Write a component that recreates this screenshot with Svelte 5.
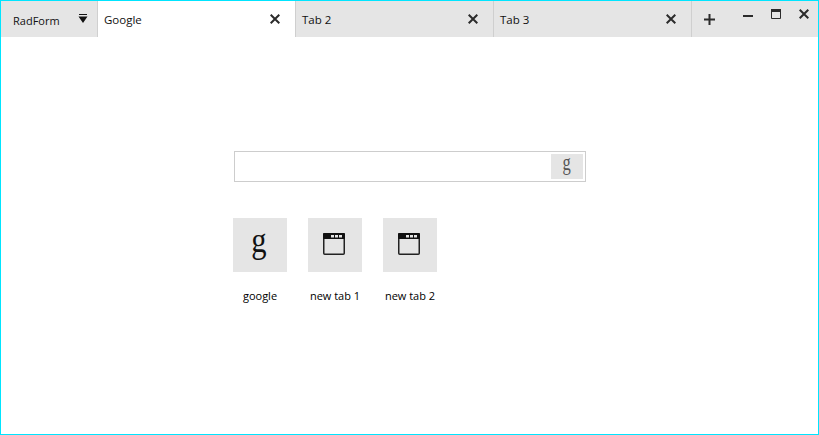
<script>
  const tabs = [
    { title: "Google", active: true },
    { title: "Tab 2" },
    { title: "Tab 3" }
  ]

  const shortcuts = [
    { label: "google", icon: "g" },
    { label: "new tab 1", icon: "window" },
    { label: "new tab 2", icon: "window" }
  ]
</script>

<div class="form">
  <header class="titlebar">
    <div class="brand">
      <span class="brand-name">RadForm</span>
      <svg class="menu-arrow" width="10" height="9" viewBox="0 0 10 9">
        <path d="M1 0h8v1H1z M0.5 2.5h9L5 9z" fill="#111" />
      </svg>
    </div>

    {#each tabs as tab}
      <div class="tab" class:active={tab.active}>
        <span class="tab-title">{tab.title}</span>
        <svg class="x" width="10" height="10" viewBox="0 0 10 10">
          <path d="M0.7 0.7l8.6 8.6M9.3 0.7L0.7 9.3" stroke="#2b2b2b" stroke-width="2" fill="none" />
        </svg>
      </div>
    {/each}

    <button class="add" aria-label="new tab">
      <svg width="11" height="11" viewBox="0 0 11 11">
        <path d="M0 5.5h11M5.5 0v11" stroke="#2b2b2b" stroke-width="2" fill="none" />
      </svg>
    </button>

    <div class="window-buttons">
      <svg width="10" height="10" viewBox="0 0 10 10">
        <path d="M0 7h10" stroke="#2b2b2b" stroke-width="2" fill="none" />
      </svg>
      <svg width="10" height="10" viewBox="0 0 10 10">
        <path d="M0.5 0.5h9v9h-9z" stroke="#2b2b2b" fill="none" />
        <path d="M0 1.5h10" stroke="#2b2b2b" stroke-width="3" fill="none" />
      </svg>
      <svg width="10" height="10" viewBox="0 0 10 10">
        <path d="M0.7 0.7l8.6 8.6M9.3 0.7L0.7 9.3" stroke="#2b2b2b" stroke-width="2" fill="none" />
      </svg>
    </div>
  </header>

  <main class="content">
    <div class="search">
      <span class="search-btn"><span class="search-g">g</span></span>
    </div>

    <div class="shortcuts">
      {#each shortcuts as item}
        <div class="shortcut">
          <div class="tile">
            {#if item.icon == "g"}
              <span class="big-g">g</span>
            {:else}
              <svg class="window-icon" width="22" height="22" viewBox="0 0 22 22">
                <rect x="0.75" y="0.75" width="20.5" height="20.5" rx="1" fill="none" stroke="#222" stroke-width="1.5" />
                <rect x="0" y="0" width="22" height="6" rx="1" fill="#111" />
                <path d="M8 2h3v2.5H8z M12 2h3v2.5h-3z M16 2h3v2.5h-3z" fill="#e5e5e5" />
              </svg>
            {/if}
          </div>
          <span class="label">{item.label}</span>
        </div>
      {/each}
    </div>
  </main>
</div>

<style>
  :global(body) {
    margin: 0;
    background: #fff;
  }

  .form {
    width: 819px;
    height: 435px;
    box-sizing: border-box;
    border: 1px solid #00e5ff;
    display: flex;
    flex-direction: column;
    font-family: "Open Sans", "Noto Sans", sans-serif;
    font-size: 11px;
    color: #111;
    overflow: hidden;
  }

  .titlebar {
    height: 36px;
    flex: none;
    display: flex;
    background: #e5e5e5;
  }

  .brand {
    width: 97px;
    flex: none;
    box-sizing: border-box;
    display: flex;
    padding-left: 12px;
    border-right: 1px solid #d0d0d0;
  }

  .brand-name {
    line-height: 39px;
  }

  .menu-arrow {
    margin: 13px 0 0 18px;
  }

  .tab {
    width: 198px;
    flex: none;
    box-sizing: border-box;
    display: flex;
    align-items: center;
    justify-content: space-between;
    padding: 0 15px 0 6px;
    border-right: 1px solid #cfcfcf;
  }

  .tab-title {
    padding-top: 1px;
    font-size: 11.5px;
  }

  .tab.active {
    background: #fff;
  }

  .add {
    width: 35px;
    flex: none;
    border: 0;
    padding: 0;
    background: none;
    display: flex;
    align-items: center;
    justify-content: center;
  }

  .window-buttons {
    flex: 1;
    display: flex;
    justify-content: flex-end;
    gap: 18px;
    padding: 8px 9px 0 0;
    box-sizing: border-box;
  }

  .content {
    flex: 1;
    padding: 114px 0 0 232px;
  }

  .search {
    width: 352px;
    height: 31px;
    margin-left: 1px;
    box-sizing: border-box;
    border: 1px solid #cdcdcd;
    display: flex;
    justify-content: flex-end;
    align-items: center;
    padding-right: 2px;
  }

  .search-btn {
    width: 32px;
    height: 25px;
    background: #e5e5e5;
    display: flex;
    justify-content: center;
    font-family: "Liberation Serif", serif;
    font-size: 23px;
    line-height: 18px;
    color: #555;
  }

  .search-g {
    display: block;
    transform: scaleX(0.72);
  }

  .shortcuts {
    display: flex;
    gap: 21px;
    margin-top: 36px;
  }

  .shortcut {
    width: 54px;
    display: flex;
    flex-direction: column;
    align-items: center;
  }

  .tile {
    width: 54px;
    height: 54px;
    background: #e5e5e5;
    display: flex;
    align-items: center;
    justify-content: center;
  }

  .window-icon {
    margin: -2px 0 0 -2px;
  }

  .big-g {
    font-family: "Liberation Serif", serif;
    font-size: 36px;
    line-height: 32px;
    margin: -11px 0 0 -3px;
    color: #111;
    transform: scaleX(0.85);
  }

  .label {
    margin-top: 16px;
    white-space: nowrap;
    line-height: 16px;
    color: #000;
  }
</style>
